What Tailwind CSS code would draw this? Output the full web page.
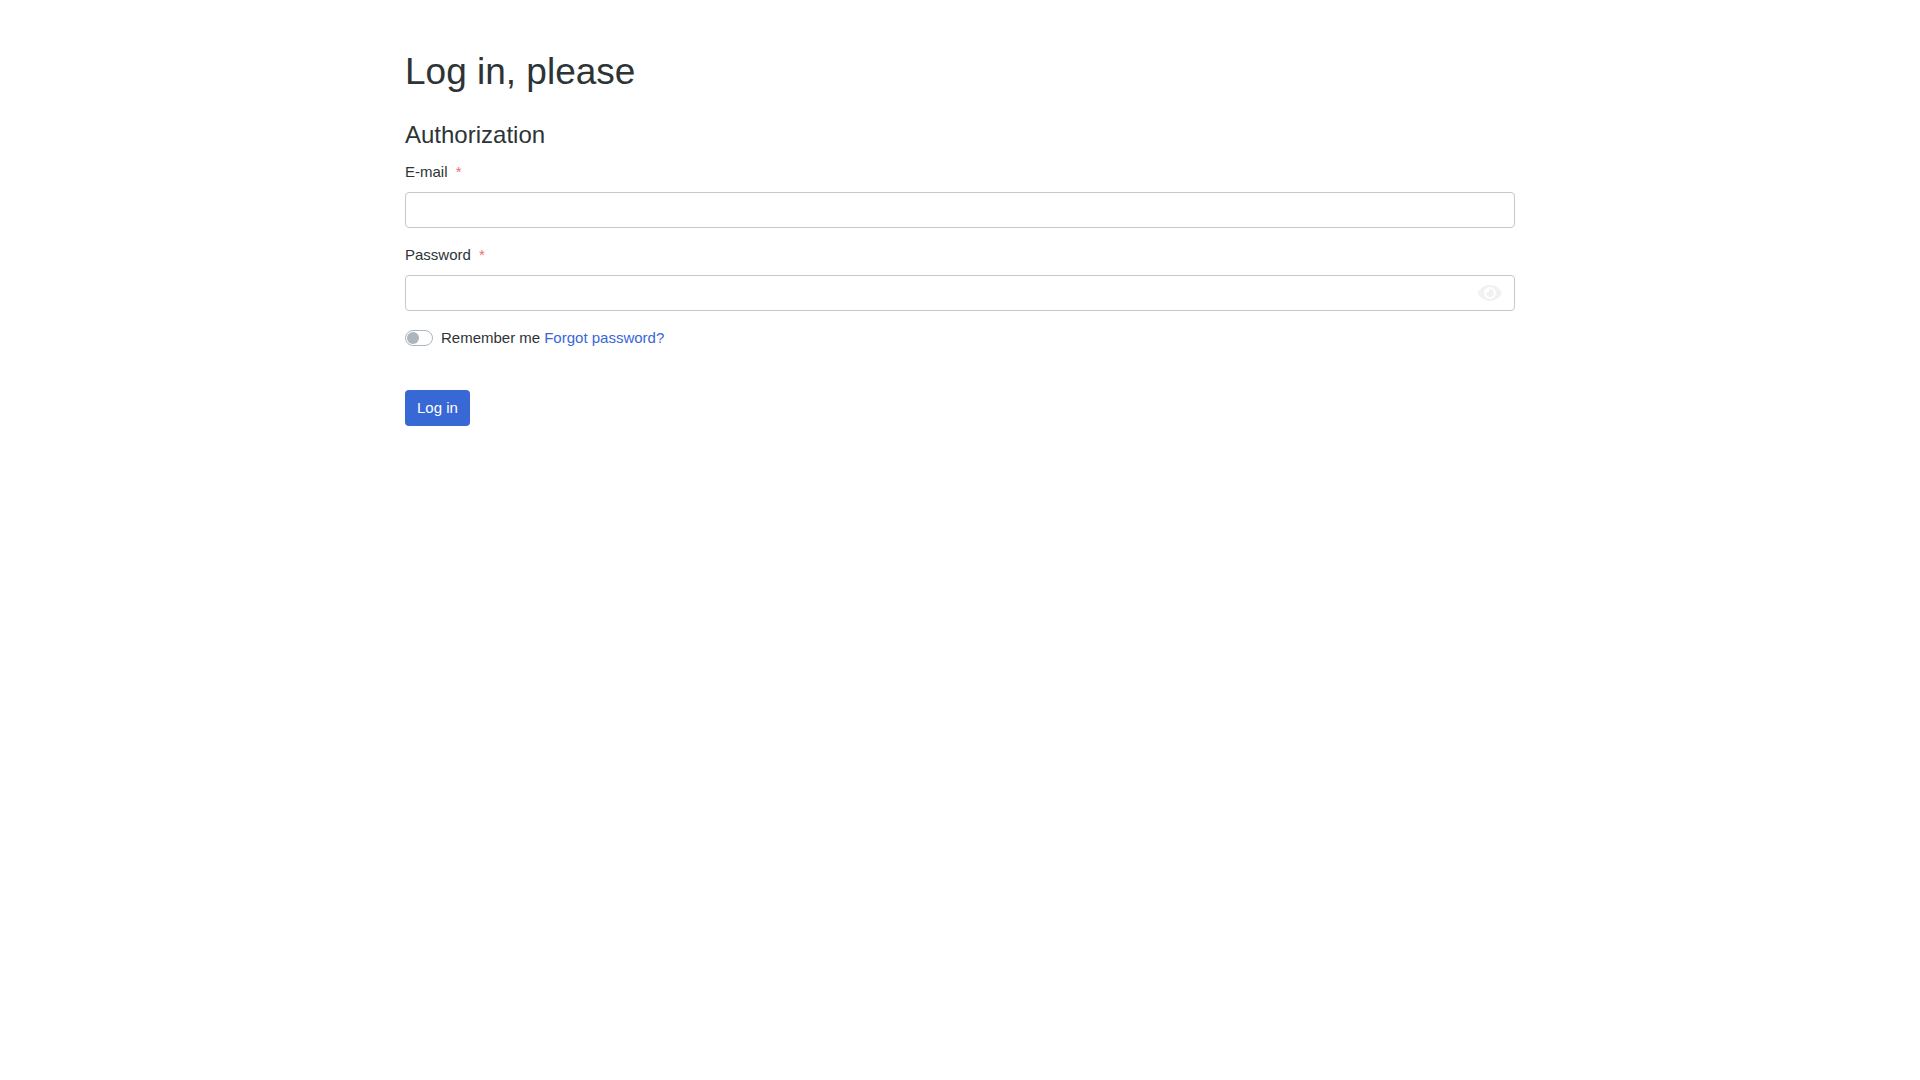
<!doctype html>
<html lang="en">
  <head>
    <meta charset="UTF-8" />
    <meta name="viewport" content="width=device-width, initial-scale=1.0" />
    <title>Log in</title>
    <script src="https://cdn.jsdelivr.net/npm/@tailwindcss/browser@4"></script>
  </head>
  <body
    class="bg-white font-['Liberation_Sans',Arial,sans-serif] text-[15px] leading-6 text-[#2d3436]"
  >
    <main class="mx-auto w-full max-w-[1140px] px-[15px] py-12">
      <h1 class="mb-6 text-[37px] leading-12">Log in, please</h1>

      <!-- Login form -->
      <form action="#" method="post">
        <h2 class="mb-2.5 text-2xl leading-[30px]">Authorization</h2>

        <div class="mb-[15px]">
          <label for="email" class="mb-2 block">
            E-mail <span class="ml-1 text-[#ef6b75]">*</span>
          </label>
          <input
            type="email"
            id="email"
            name="email"
            required
            class="block h-9 w-full rounded border border-[#c8c8c8] px-3 shadow-none outline-none focus:border-[#3867d6]"
          />
        </div>

        <div class="mb-[15px]">
          <label for="password" class="mb-2 block">
            Password <span class="ml-1 text-[#ef6b75]">*</span>
          </label>
          <div class="relative">
            <input
              type="password"
              id="password"
              name="password"
              required
              class="block h-9 w-full rounded border border-[#c8c8c8] pr-12 pl-3 shadow-none outline-none focus:border-[#3867d6]"
            />
            <button
              type="button"
              aria-label="Show password"
              class="absolute inset-y-0 right-[13px] flex cursor-pointer items-center text-[#f1f1f1]"
            >
              <svg class="h-[22px] w-6" viewBox="0 0 576 512" fill="currentColor">
                <path
                  d="M572.52 241.4C518.29 135.59 410.93 64 288 64S57.68 135.64 3.48 241.41a32.35 32.35 0 0 0 0 29.19C57.71 376.41 165.07 448 288 448s230.32-71.64 284.52-177.41a32.35 32.35 0 0 0 0-29.19zM288 400a144 144 0 1 1 144-144 143.93 143.93 0 0 1-144 144zm0-240a95.31 95.31 0 0 0-25.31 3.79 47.85 47.85 0 0 1-66.9 66.9A95.78 95.78 0 1 0 288 160z"
                />
              </svg>
            </button>
          </div>
        </div>

        <!-- Remember me switch -->
        <div class="mb-10 flex items-center gap-1">
          <label for="remember" class="flex items-center gap-2">
            <input
              type="checkbox"
              role="switch"
              id="remember"
              name="remember"
              class="h-4 w-7 appearance-none rounded-full border border-[#adb5bd] bg-white p-px before:block before:size-3 before:rounded-full before:bg-[#adb5bd] checked:border-[#3867d6] checked:bg-[#3867d6] checked:before:ml-3 checked:before:bg-white"
            />
            Remember me
          </label>
          <a href="#" class="text-[#3867d6] hover:underline">Forgot password?</a>
        </div>

        <button
          type="submit"
          class="h-9 cursor-pointer rounded bg-[#3867d6] px-3 text-white"
        >
          Log in
        </button>
      </form>
    </main>
  </body>
</html>
